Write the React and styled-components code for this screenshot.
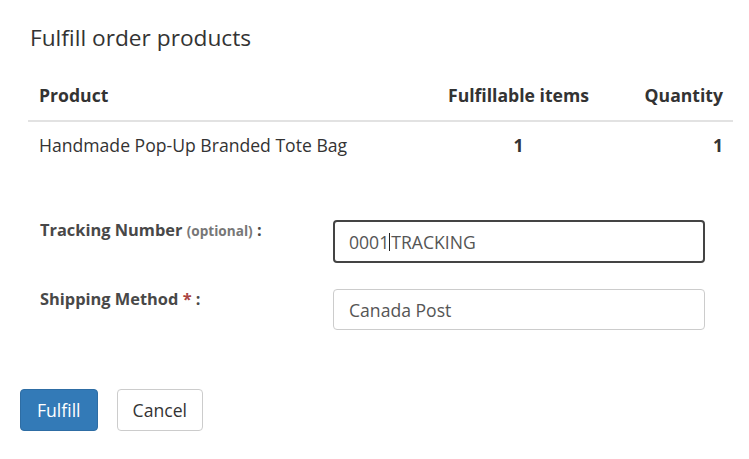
import React from "react";
import styled, { createGlobalStyle } from "styled-components";

const Global = createGlobalStyle`
  html, body { margin: 0; padding: 0; background: #fff; }
  body { font-family: "Open Sans", "Noto Sans", sans-serif; color: #333; }
  * { box-sizing: border-box; }
`;

const Page = styled.div`
  width: 749px;
  padding: 25px 16px 0 20px;
`;

const Title = styled.h2`
  margin: 0 0 0 10px;
  font-size: 22.7px;
  line-height: 26px;
  font-weight: 400;
  color: #333;
`;

const Table = styled.table`
  margin: 24px 0 0 8px;
  width: 705px;
  border-collapse: collapse;
  table-layout: fixed;
  font-size: 17.6px;
`;

const Th = styled.th`
  width: ${(p) => p.$w}px;
  text-align: ${(p) => p.$align || "left"};
  font-weight: 700;
  color: #333;
  padding: 8px 10px 13px 11px;
  border-bottom: 2px solid #e2e2e2;
  line-height: 24px;
  white-space: nowrap;
`;

const Td = styled.td`
  text-align: ${(p) => p.$align || "left"};
  font-weight: ${(p) => (p.$bold ? 700 : 400)};
  color: #333;
  padding: 11px 10px 11px 11px;
  line-height: 24px;
  white-space: nowrap;
`;

const Form = styled.div`
  margin-top: 52px;
  display: flex;
  flex-direction: column;
  gap: 26px;
`;

const Row = styled.div`
  display: grid;
  grid-template-columns: 313px 372px;
  align-items: start;
`;

const Label = styled.label`
  padding: 0 0 0 20px;
  font-size: 16.4px;
  font-weight: 700;
  color: #484848;
  line-height: 20px;
`;

const Hint = styled.span`
  font-size: 13.6px;
  color: #777;
`;

const Req = styled.span`
  color: #a94442;
`;

const Input = styled.div`
  height: ${(p) => (p.$focused ? 43 : 41)}px;
  border: ${(p) => (p.$focused ? "2px solid #444" : "1px solid #ccc")};
  border-radius: 4px;
  padding: 0 ${(p) => (p.$focused ? 14 : 15)}px;
  display: flex;
  align-items: center;
  font-size: 17.6px;
  color: #555;
`;

const Caret = styled.span`
  display: inline-block;
  width: 1px;
  height: 18px;
  background: #222;
  margin: 0 1px 0 0;
`;

const Actions = styled.div`
  margin-top: 59px;
  display: flex;
  gap: 19px;
`;

const Button = styled.button`
  height: 42px;
  padding: 0 ${(p) => (p.$primary ? 16 : 15)}px;
  font-family: inherit;
  font-size: 17.6px;
  border-radius: 4px;
  border: 1px solid ${(p) => (p.$primary ? "#2e6da4" : "#ccc")};
  background: ${(p) => (p.$primary ? "#337ab7" : "#fff")};
  color: ${(p) => (p.$primary ? "#fff" : "#333")};
`;

export default function App() {
  return (
    <Page>
      <Global />
      <Title>Fulfill order products</Title>
      <Table>
        <thead>
          <tr>
            <Th $w={388}>Product</Th>
            <Th $w={204} $align="center">Fulfillable items</Th>
            <Th $w={113} $align="right">Quantity</Th>
          </tr>
        </thead>
        <tbody>
          <tr>
            <Td>Handmade Pop-Up Branded Tote Bag</Td>
            <Td $align="center" $bold>1</Td>
            <Td $align="right" $bold>1</Td>
          </tr>
        </tbody>
      </Table>
      <Form>
        <Row>
          <Label>
            Tracking Number <Hint>(optional)</Hint> :
          </Label>
          <Input $focused>
            0001<Caret />TRACKING
          </Input>
        </Row>
        <Row>
          <Label>
            Shipping Method <Req>*</Req> :
          </Label>
          <Input>Canada Post</Input>
        </Row>
      </Form>
      <Actions>
        <Button $primary>Fulfill</Button>
        <Button>Cancel</Button>
      </Actions>
    </Page>
  );
}
